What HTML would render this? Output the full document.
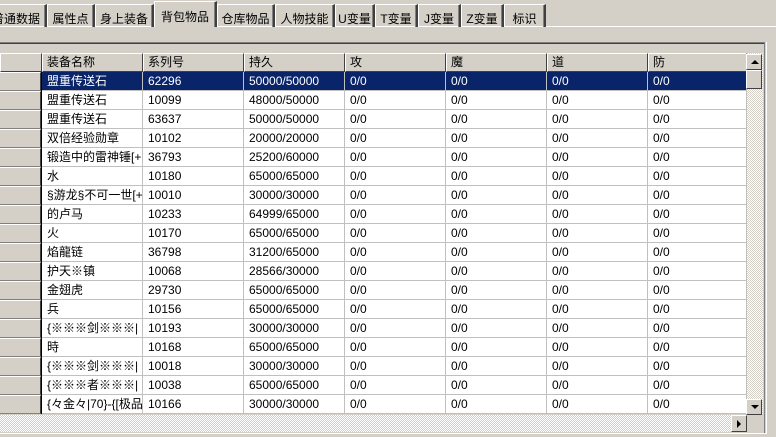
<!DOCTYPE html>
<html><head><meta charset="utf-8"><style>
*{margin:0;padding:0;box-sizing:border-box}
body{width:776px;height:437px;background:#d4d0c8;position:relative;overflow:hidden;font-family:"Liberation Sans","Noto Sans CJK SC","WenQuanYi Zen Hei",sans-serif;font-size:12px;color:#000}
.tab{position:absolute;top:4px;height:23px;border-top:1px solid #fff;border-left:1px solid #fff;border-right:2px solid #404040;box-shadow:inset -1px 0 #808080;padding:5px 0 0 0;text-align:center;font-size:12px;white-space:nowrap}
.sel{top:1px;height:26px;padding-top:6px;background:#d4d0c8;z-index:2}
.a{position:absolute}
.cell{position:absolute;height:19px;line-height:19px;padding-left:5px;white-space:nowrap;overflow:hidden;font-size:12px}
.hd{position:absolute;top:53px;height:19px;background:#d4d0c8;border-top:1px solid #fff;border-left:1px solid #fff;border-right:1px solid #404040;border-bottom:1px solid #404040;padding-left:4px;line-height:17px;font-size:12px}
.rh{position:absolute;left:0;width:41px;height:19px;background:#d4d0c8;border-top:1px solid #fff;border-bottom:1px solid #808080;border-right:1px solid #404040}
.btn{position:absolute;background:#d4d0c8;border-top:1px solid #fff;border-left:1px solid #fff;border-right:1px solid #404040;border-bottom:1px solid #404040}
</style></head><body>
<div class="a" style="left:0;top:26px;width:776px;height:1px;background:#fff"></div>
<div class="tab" style="left:-14px;width:61px">普通数据</div>
<div class="tab" style="left:47px;width:48px">属性点</div>
<div class="tab" style="left:95px;width:59px">身上装备</div>
<div class="tab sel" style="left:154px;width:63px">背包物品</div>
<div class="tab" style="left:217px;width:58px">仓库物品</div>
<div class="tab" style="left:275px;width:60px">人物技能</div>
<div class="tab" style="left:335px;width:40px">U变量</div>
<div class="tab" style="left:375px;width:43px">T变量</div>
<div class="tab" style="left:418px;width:43px">J变量</div>
<div class="tab" style="left:461px;width:43px">Z变量</div>
<div class="tab" style="left:504px;width:42px">标识</div>

<div class="a" style="left:0;top:42px;width:765px;height:1px;background:#808080"></div>
<div class="a" style="left:0;top:43px;width:764px;height:1px;background:#404040"></div>
<div class="a" style="left:764px;top:42px;width:1px;height:392px;background:#808080"></div>
<div class="a" style="left:766px;top:42px;width:1px;height:392px;background:#fff"></div>
<div class="a" style="left:0;top:433px;width:767px;height:1px;background:#fff"></div>
<div class="a" style="left:0;top:432px;width:764px;height:1px;background:#d4d0c8"></div>

<div class="hd" style="left:0;width:42px"></div>
<div class="hd" style="left:42px;width:101px">装备名称</div>
<div class="hd" style="left:143px;width:101px">系列号</div>
<div class="hd" style="left:244px;width:101px">持久</div>
<div class="hd" style="left:345px;width:101px">攻</div>
<div class="hd" style="left:446px;width:101px">魔</div>
<div class="hd" style="left:547px;width:101px">道</div>
<div class="hd" style="left:648px;width:99px">防</div>

<div class="a" style="left:42px;top:72px;width:705px;height:342px;background:#fff"></div>
<div class="a" style="left:42px;top:72px;width:705px;height:19px;background:#0a246a"></div>
<div id="rows"></div>

<div class="a" style="left:747px;top:53px;width:16px;height:362px;background:repeating-conic-gradient(#fff 0 25%,#d4d0c8 0 50%) 0 0/2px 2px"></div>
<div class="btn" style="left:746px;top:54px;width:16px;height:16px"><div style="position:absolute;left:4px;top:5px;width:0;height:0;border-left:4px solid transparent;border-right:4px solid transparent;border-bottom:4px solid #000"></div></div>
<div class="btn" style="left:746px;top:70px;width:16px;height:19px"></div>
<div class="btn" style="left:746px;top:399px;width:16px;height:16px"><div style="position:absolute;left:4px;top:5px;width:0;height:0;border-left:4px solid transparent;border-right:4px solid transparent;border-top:4px solid #000"></div></div>
<div class="a" style="left:0;top:415px;width:747px;height:17px;background:repeating-conic-gradient(#fff 0 25%,#d4d0c8 0 50%) 0 0/2px 2px"></div>
<div class="btn" style="left:731px;top:415px;width:16px;height:17px"><div style="position:absolute;left:5px;top:4px;width:0;height:0;border-top:4px solid transparent;border-bottom:4px solid transparent;border-left:4px solid #000"></div></div>
<div class="a" style="left:747px;top:415px;width:16px;height:17px;background:#d4d0c8"></div>

<script>
var d=[["盟重传送石","62296","50000/50000"],["盟重传送石","10099","48000/50000"],["盟重传送石","63637","50000/50000"],["双倍经验勋章","10102","20000/20000"],["锻造中的雷神锤[+","36793","25200/60000"],["水","10180","65000/65000"],["§游龙§不可一世[+","10010","30000/30000"],["的卢马","10233","64999/65000"],["火","10170","65000/65000"],["焰龍链","36798","31200/65000"],["护天※镇","10068","28566/30000"],["金翅虎","29730","65000/65000"],["兵","10156","65000/65000"],["{※※※剑※※※|","10193","30000/30000"],["時","10168","65000/65000"],["{※※※剑※※※|","10018","30000/30000"],["{※※※者※※※|","10038","65000/65000"],["{々金々|70}-{[极品","10166","30000/30000"]];
var h="",xs=[42,143,244,345,446,547,648,747];
for(var i=0;i<18;i++){var y=72+i*19,s=i==0;var c=s?"#fff":"#000";
h+='<div class="rh" style="top:'+y+'px"></div>';
var v=[d[i][0],d[i][1],d[i][2],"0/0","0/0","0/0","0/0"];
for(var j=0;j<7;j++){h+='<div class="cell" style="left:'+xs[j]+'px;top:'+y+'px;width:'+(xs[j+1]-xs[j]-1)+'px;color:'+c+'">'+v[j]+'</div>';
h+='<div class="a" style="left:'+(xs[j+1]-1)+'px;top:'+y+'px;width:1px;height:19px;background:#c0c0c0"></div>';}
h+='<div class="a" style="left:42px;top:'+(y+18)+'px;width:705px;height:1px;background:#c0c0c0"></div>';}
h+='<div class="a" style="left:41px;top:72px;width:1px;height:342px;background:#000"></div>';
document.getElementById("rows").innerHTML=h;
</script>
</body></html>
